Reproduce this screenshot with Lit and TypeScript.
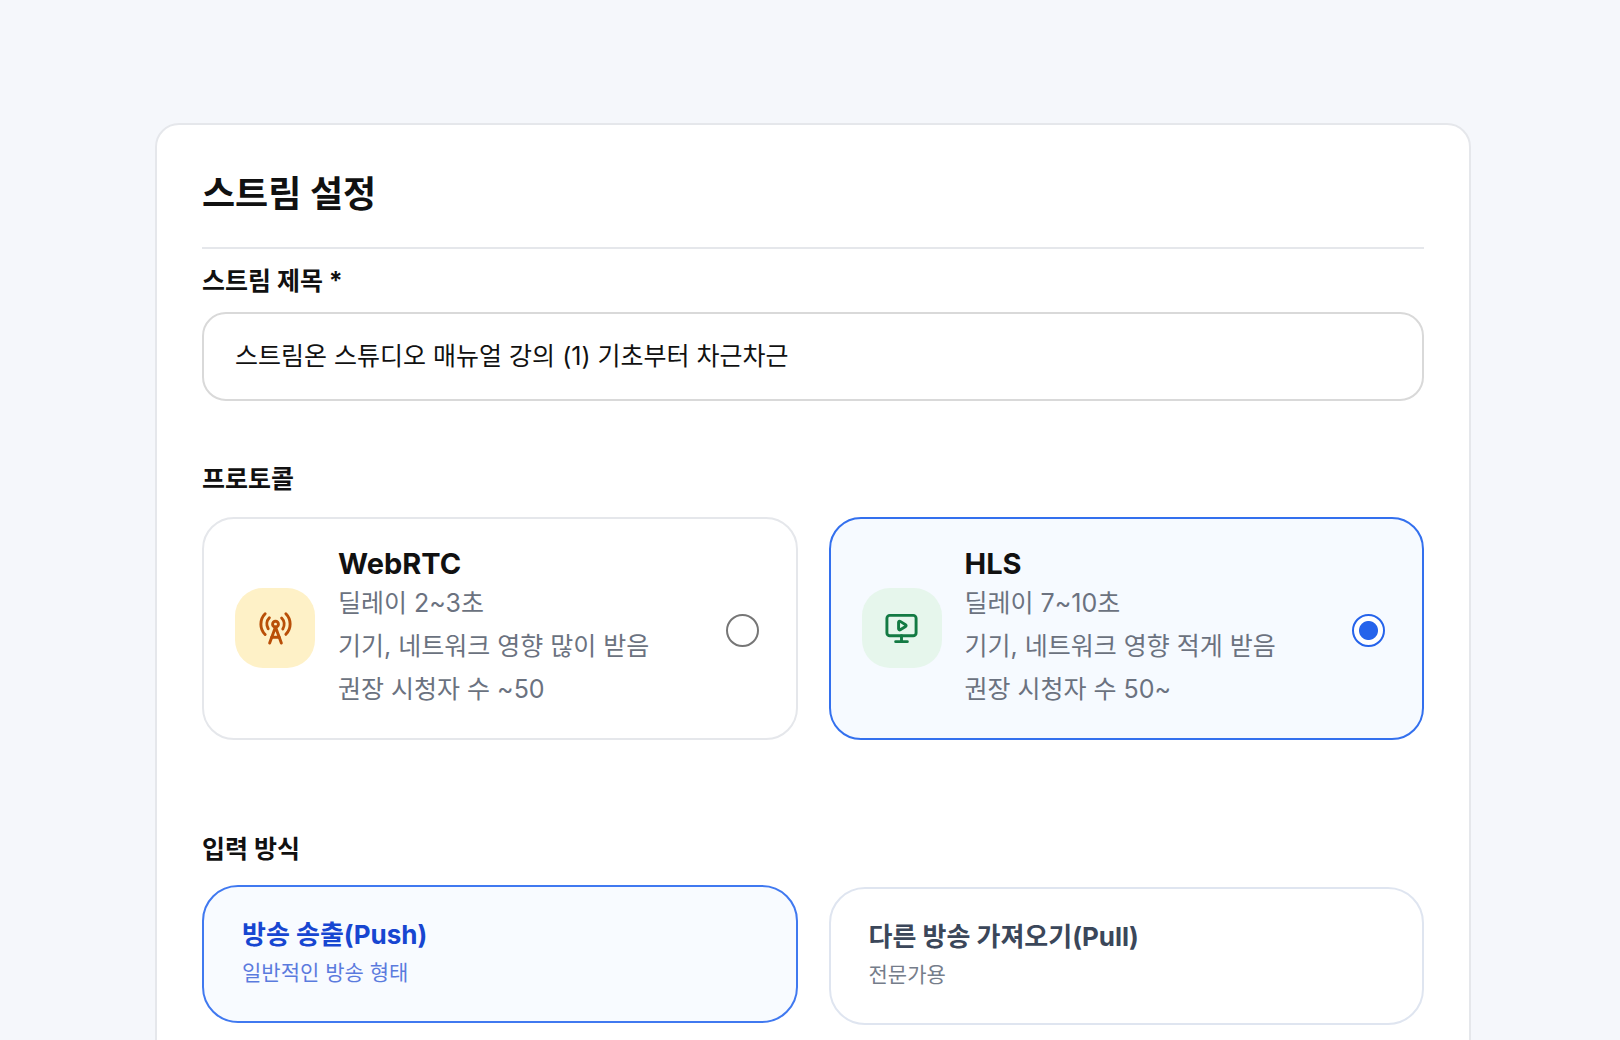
import { LitElement, html, css, svg } from "lit";
import { customElement, state } from "lit/decorators.js";
import { classMap } from "lit/directives/class-map.js";

const towerIcon = svg`
  <path d="M4.9 16.1C1 12.2 1 5.8 4.9 1.9"/>
  <path d="M7.8 4.7a6.14 6.14 0 0 0-.8 7.5"/>
  <circle cx="12" cy="9" r="2"/>
  <path d="M16.2 4.8c2 2 2.26 5.11.8 7.47"/>
  <path d="M19.1 1.9a9.96 9.96 0 0 1 0 14.1"/>
  <path d="M9.5 18h5"/>
  <path d="m8 22 4-11 4 11"/>`;

const monitorIcon = svg`
  <path d="M10 7.75a.75.75 0 0 1 1.142-.638l3.664 2.249a.75.75 0 0 1 0 1.278l-3.664 2.25a.75.75 0 0 1-1.142-.64z"/>
  <path d="M12 17v4"/>
  <path d="M8 21h8"/>
  <rect x="2" y="3" width="20" height="14" rx="2"/>`;

const protocols = [
  {
    id: "webrtc",
    name: "WebRTC",
    tone: "amber",
    icon: towerIcon,
    lines: ["딜레이 2~3초", "기기, 네트워크 영향 많이 받음", "권장 시청자 수 ~50"],
  },
  {
    id: "hls",
    name: "HLS",
    tone: "green",
    icon: monitorIcon,
    lines: ["딜레이 7~10초", "기기, 네트워크 영향 적게 받음", "권장 시청자 수 50~"],
  },
];

const methods = [
  { id: "push", name: "방송 송출(Push)", note: "일반적인 방송 형태" },
  { id: "pull", name: "다른 방송 가져오기(Pull)", note: "전문가용" },
];

@customElement("app-root")
export class AppRoot extends LitElement {
  @state() private protocol = "hls";
  @state() private method = "push";
  @state() private streamTitle = "스트림온 스튜디오 매뉴얼 강의 (1) 기초부터 차근차근";

  static styles = css`
    :host {
      display: block;
      font-family: Inter, "Noto Sans CJK KR", sans-serif;
      color: #111111;
    }
    * {
      box-sizing: border-box;
    }
    .page {
      height: 100vh;
      overflow: hidden;
      padding: 123px 149px 0 155px;
      background: #f5f7fb;
    }
    .panel {
      padding: 45px;
      background: #ffffff;
      border: 2px solid #e5e7eb;
      border-radius: 24px;
    }
    .heading {
      margin: 0;
      padding: 1px 0 30px;
      border-bottom: 2px solid #e5e7eb;
      font-size: 36px;
      line-height: 46px;
      font-weight: 700;
    }
    .field {
      display: flex;
      flex-direction: column;
      gap: 13px;
      padding-top: 14px;
    }
    .label {
      padding: 0;
      font-size: 25px;
      line-height: 36px;
      font-weight: 700;
    }
    .text-input {
      width: 100%;
      height: 89px;
      padding: 0 31px 5px;
      border: 2px solid #d9d9d9;
      border-radius: 24px;
      background: #ffffff;
      color: #111111;
      font: inherit;
      font-size: 25px;
    }
    .group {
      min-width: 0;
      margin: 60px 0 0;
      padding: 0;
      border: 0;
    }
    .group.methods {
      margin-top: 91px;
    }
    .options {
      display: grid;
      grid-template-columns: 1fr 1fr;
      gap: 31px;
      padding-top: 20px;
    }
    .protocol {
      display: flex;
      align-items: center;
      gap: 23px;
      padding: 26px 37px 27px 31px;
      border: 2px solid #e5e7eb;
      border-radius: 32px;
      cursor: pointer;
    }
    .protocol.selected {
      border-color: #3370ee;
      background: #f6faff;
    }
    .badge {
      display: grid;
      place-items: center;
      width: 80px;
      height: 80px;
      border-radius: 28px;
    }
    .amber {
      background: #fef1c7;
      color: #b94f08;
    }
    .green {
      background: #e6f6ec;
      color: #137a43;
    }
    .icon {
      width: 35px;
      height: 35px;
      fill: none;
      stroke: currentColor;
      stroke-width: 2;
      stroke-linecap: round;
      stroke-linejoin: round;
    }
    .body {
      flex: 1;
      display: flex;
      flex-direction: column;
    }
    .name {
      font-size: 29px;
      line-height: 37px;
      font-weight: 700;
    }
    .line {
      color: #6b7280;
      font-size: 25px;
      line-height: 43px;
    }
    .radio {
      appearance: none;
      width: 33px;
      height: 33px;
      margin: 5px 0 0;
      border: 2px solid #767676;
      border-radius: 50%;
      background: #ffffff;
    }
    .radio:checked {
      border-color: #2563eb;
      background: radial-gradient(circle, #2563eb 9px, #ffffff 10px);
    }
    .method {
      display: flex;
      flex-direction: column;
      padding: 28px 38px 30px;
      border: 2px solid #dfe5f0;
      border-radius: 36px;
      background: #ffffff;
      color: #3b475a;
      font: inherit;
      text-align: left;
      cursor: pointer;
    }
    .method.selected {
      border-color: #4079f0;
      background: #f8fbff;
      color: #1746d1;
      transform: translateY(-2px);
    }
    .method-name {
      font-size: 26px;
      line-height: 40px;
      font-weight: 700;
    }
    .method-note {
      font-size: 21px;
      line-height: 36px;
      opacity: 0.7;
    }
  `;

  render() {
    return html`
      <main class="page">
        <form class="panel">
          <h1 class="heading">스트림 설정</h1>
          <div class="field">
            <label class="label" for="title">스트림 제목 *</label>
            <input
              class="text-input"
              id="title"
              type="text"
              required
              .value=${this.streamTitle}
              @input=${(e: Event) => (this.streamTitle = (e.target as HTMLInputElement).value)}
            />
          </div>
          <fieldset class="group">
            <legend class="label">프로토콜</legend>
            <div class="options">
              ${protocols.map(
                (p) => html`
                  <label class=${classMap({ protocol: true, selected: p.id === this.protocol })} for=${p.id}>
                    <span class="badge ${p.tone}">
                      <svg class="icon" viewBox="0 0 24 24" aria-hidden="true">${p.icon}</svg>
                    </span>
                    <span class="body">
                      <span class="name">${p.name}</span>
                      ${p.lines.map((l) => html`<span class="line">${l}</span>`)}
                    </span>
                    <input
                      class="radio"
                      type="radio"
                      name="protocol"
                      id=${p.id}
                      .checked=${p.id === this.protocol}
                      @change=${() => (this.protocol = p.id)}
                    />
                  </label>
                `,
              )}
            </div>
          </fieldset>
          <fieldset class="group methods">
            <legend class="label">입력 방식</legend>
            <div class="options">
              ${methods.map(
                (m) => html`
                  <button
                    type="button"
                    class=${classMap({ method: true, selected: m.id === this.method })}
                    aria-pressed=${m.id === this.method}
                    @click=${() => (this.method = m.id)}
                  >
                    <span class="method-name">${m.name}</span>
                    <span class="method-note">${m.note}</span>
                  </button>
                `,
              )}
            </div>
          </fieldset>
        </form>
      </main>
    `;
  }
}
